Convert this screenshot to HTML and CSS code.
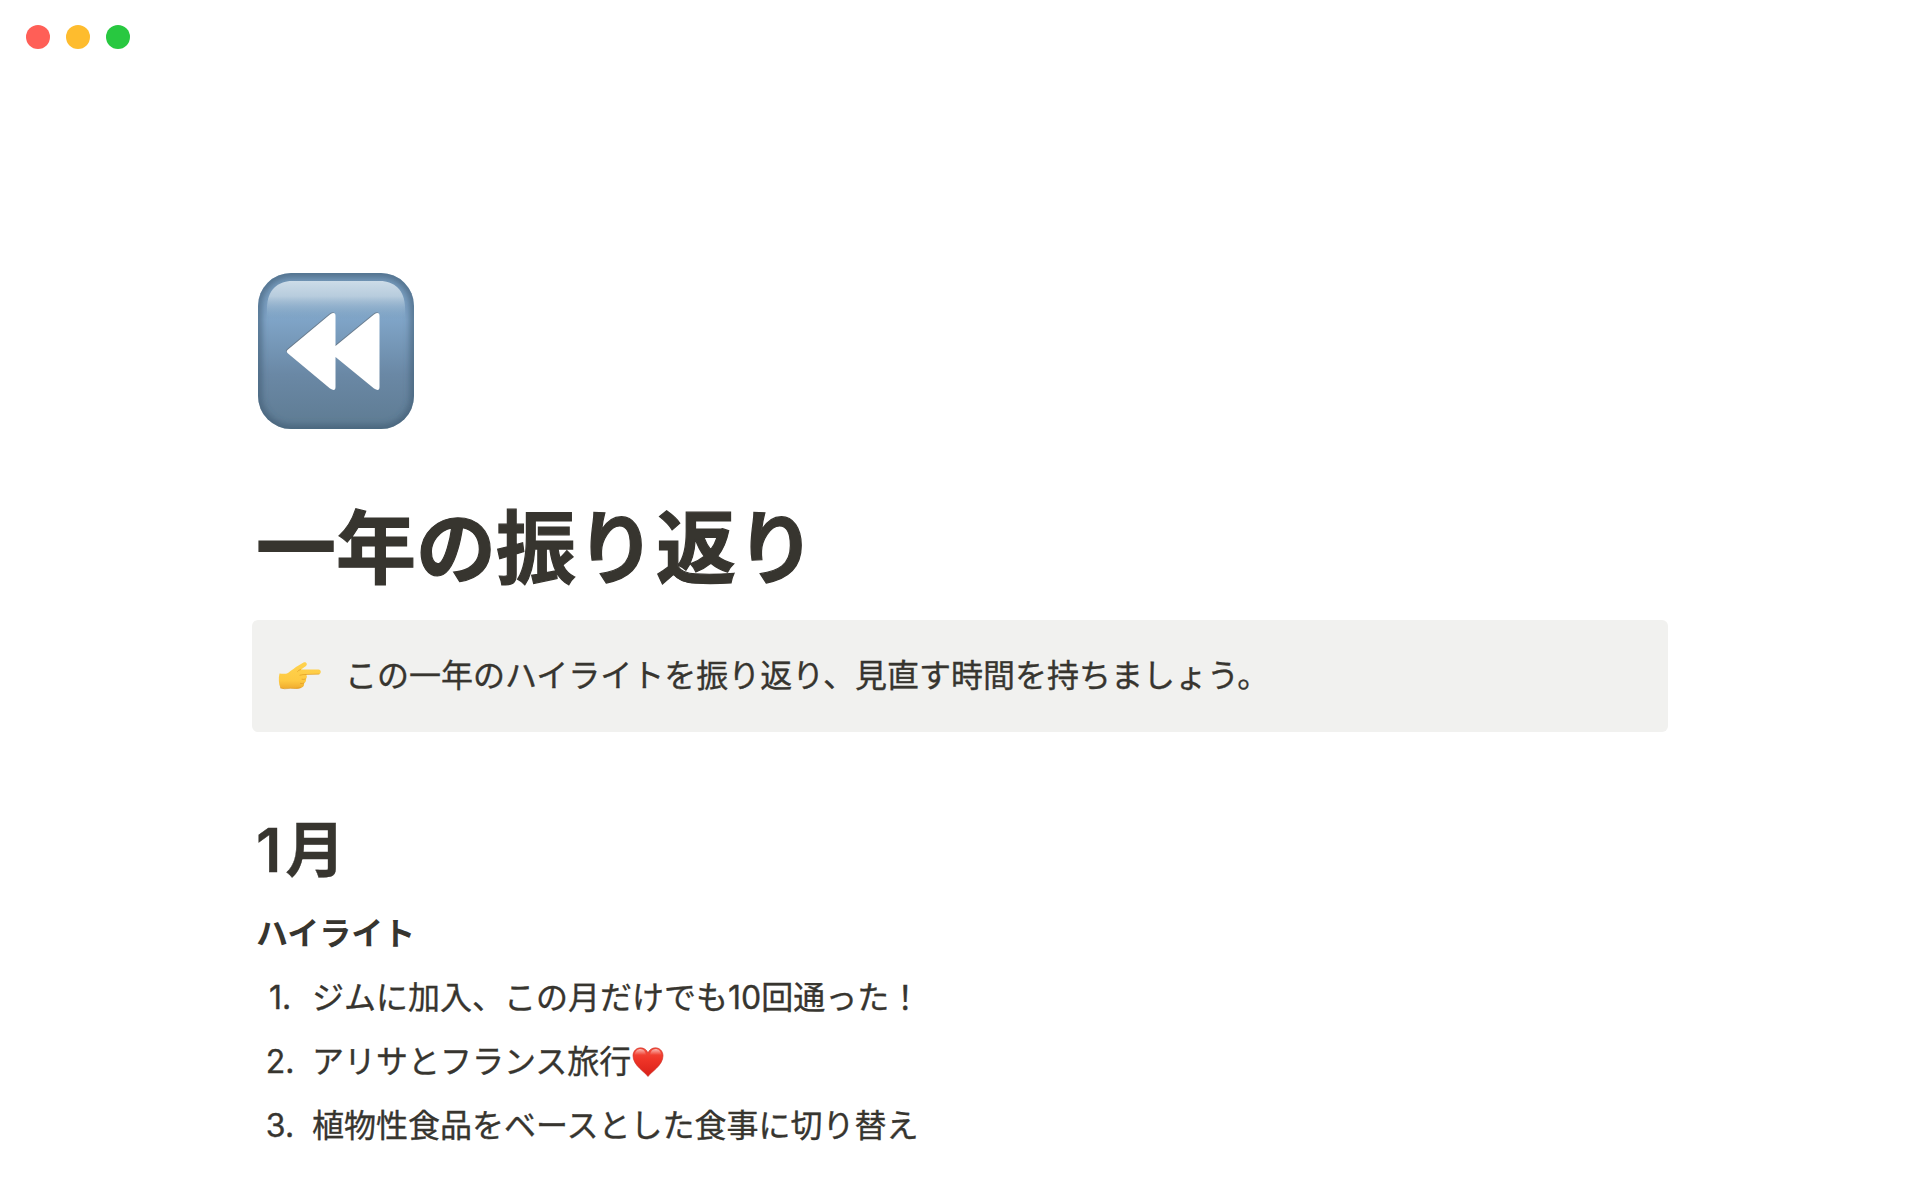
FILE: index.html
```html
<!DOCTYPE html>
<html lang="ja">
<head>
<meta charset="utf-8">
<title>一年の振り返り</title>
<link rel="stylesheet" href="styles.css">
</head>
<body>
<header class="titlebar">
  <span class="light light-close"></span>
  <span class="light light-minimize"></span>
  <span class="light light-zoom"></span>
</header>
<main class="page">
  <svg class="page-icon" viewBox="0 0 156 156" aria-hidden="true">
    <defs>
      <linearGradient id="face" x1="0" y1="0" x2="0" y2="1">
        <stop offset="0" stop-color="#7195b6"/>
        <stop offset=".3" stop-color="#7fa4c7"/>
        <stop offset=".65" stop-color="#6a88a5"/>
        <stop offset="1" stop-color="#5e7b92"/>
      </linearGradient>
      <linearGradient id="gloss" x1="0" y1="0" x2="0" y2="1">
        <stop offset="0" stop-color="#cddce8"/>
        <stop offset=".4" stop-color="#c3d5e3" stop-opacity=".85"/>
        <stop offset="1" stop-color="#8fb0cc" stop-opacity="0"/>
      </linearGradient>
      <clipPath id="tile"><rect width="156" height="156" rx="33"/></clipPath>
      <filter id="soft" x="-10%" y="-10%" width="120%" height="120%"><feGaussianBlur stdDeviation="3.2"/></filter>
    </defs>
    <g clip-path="url(#tile)">
      <rect width="156" height="156" fill="url(#face)"/>
      <rect width="156" height="156" rx="33" fill="none" stroke="#3c566e" stroke-opacity=".62" stroke-width="8" filter="url(#soft)"/>
      <path d="M9 46V35C9 17 20 8 34 8H122C136 8 147 17 147 35V46Z" fill="url(#gloss)"/>
    </g>
    <g fill="#5f6870" opacity=".6" transform="translate(-.6 -.8)">
      <path d="M30 76.500Q27.500 78.500 30 80.500L72 115.500Q77.500 119 77.500 114V84L116 115.500Q121.500 119 121.500 114V43Q121.500 38 116 41.500L77.500 73V43Q77.500 38 72 41.500Z"/>
    </g>
    <path fill="#fff" d="M30 76.500Q27.500 78.500 30 80.500L72 115.500Q77.500 119 77.500 114V84L116 115.500Q121.500 119 121.500 114V43Q121.500 38 116 41.500L77.500 73V43Q77.500 38 72 41.500Z"/>
  </svg>
  <h1 class="title">一年の振り返り</h1>
  <section class="callout">
    <svg class="callout-icon" viewBox="0 0 44 30" aria-hidden="true">
      <defs>
        <linearGradient id="skin" x1="0" y1="0" x2="0" y2="1">
          <stop offset="0" stop-color="#ffd34e"/>
          <stop offset=".7" stop-color="#fec941"/>
          <stop offset="1" stop-color="#efab2e"/>
        </linearGradient>
      </defs>
      <path fill="url(#skin)" d="M1.500 12.500C4 12.500 7 13.500 10 12C14 9 17 6.500 20.500 4.500L25.500 1.500C28 .5 30 3 28 5L23 8.500L40.500 8.500C43.500 8.700 43.500 13 40.500 13.200L28 13.500C29.500 15 29 17 27.800 18C28.500 20 27.500 21.500 26 22.200C26.500 24 25.500 26 23.500 26.500C21 28.200 17 27.800 12.500 27.300C9 26.800 6 28.500 2.500 27C.7 23 .3 17 1.500 12.500Z"/>
      <path fill="none" stroke="#dc951f" stroke-width=".8" stroke-opacity=".75" stroke-linecap="round" d="M22.500 8.600Q20.500 9 19.500 10.500M22 14.200Q25 13.300 28 13.500M24 18.300Q26 18.700 27.800 18M22.500 22.500Q24.500 23 26 22.200M2.500 27Q6 28.500 12.500 27.300Q17 27.800 23 26.700M28 13.500L41 13.100"/>
    </svg>
    <p class="callout-text">この一年のハイライトを振り返り、見直す時間を持ちましょう。</p>
  </section>
  <h2 class="month">1月</h2>
  <h3 class="subhead">ハイライト</h3>
  <ol class="highlights">
    <li class="item"><span class="marker">1.</span><span>ジムに加入、この月だけでも10回通った！</span></li>
    <li class="item"><span class="marker">2.</span><span>アリサとフランス旅行</span><svg class="heart" viewBox="0 0 32 32" aria-hidden="true">
      <defs>
        <linearGradient id="red" x1="0" y1="0" x2="0" y2="1">
          <stop offset="0" stop-color="#f4503f"/>
          <stop offset=".4" stop-color="#ef3528"/>
          <stop offset="1" stop-color="#d92019"/>
        </linearGradient>
        <linearGradient id="shine" x1="0" y1="0" x2="0" y2="1">
          <stop offset="0" stop-color="#fff" stop-opacity=".6"/>
          <stop offset="1" stop-color="#fff" stop-opacity="0"/>
        </linearGradient>
      </defs>
      <path fill="url(#red)" stroke="#c92a20" stroke-width=".6" d="M16 30.500C13 26 1 19.500 1 9.800C1 5 4.500 1.800 8.500 1.800C12 1.800 14.800 3.800 16 7C17.200 3.800 20 1.800 23.500 1.800C27.500 1.800 31 5 31 9.800C31 19.500 19 26 16 30.500Z"/>
      <path fill="url(#shine)" d="M2.800 9C3 5 5.500 3 8.500 3S13.500 5 14 9ZM18 9C18.500 5 20.500 3 23.500 3S29 5 29.200 9Z"/>
    </svg></li>
    <li class="item"><span class="marker">3.</span><span>植物性食品をベースとした食事に切り替え</span></li>
  </ol>
</main>
</body>
</html>
```
FILE: styles.css
```css
* {
  box-sizing: border-box;
  margin: 0;
  padding: 0;
}

body {
  height: 1200px;
  overflow: hidden;
  background: #fff;
  color: #37352f;
  font: 400 32px/48px Inter, "Noto Sans CJK JP", sans-serif;
  -webkit-text-stroke: 0.35px #37352f;
}

.titlebar {
  display: flex;
  gap: 16px;
  height: 74px;
  padding: 25px 26px;
}

.light {
  width: 24px;
  height: 24px;
  border-radius: 50%;
}

.light-close { background: #ff5f57; }
.light-minimize { background: #febc2e; }
.light-zoom { background: #28c840; }

.page {
  width: 1416px;
  margin: 0 auto;
  padding-top: 199px;
}

.page-icon {
  display: block;
  width: 156px;
  height: 156px;
  margin-left: 6px;
}

.title {
  height: 96px;
  margin: 71px 0 24px 4px;
  font-size: 80px;
  font-weight: 700;
  line-height: 96px;
  -webkit-text-stroke-width: 1.2px;
}

.callout {
  display: flex;
  align-items: center;
  gap: 23px;
  height: 112px;
  padding-left: 26px;
  border-radius: 6px;
  background: #f1f1ef;
}

.callout-icon {
  width: 44px;
  height: 30px;
}

.month {
  height: 78px;
  margin: 79px 0 0 4px;
  font-size: 60px;
  font-weight: 600;
  line-height: 78px;
  letter-spacing: 4px;
}

.subhead {
  margin: 21px 0 0 4px;
  font-size: 32px;
  font-weight: 600;
  -webkit-text-stroke-width: 0;
}

.highlights {
  display: flex;
  flex-direction: column;
  gap: 16px;
  margin: 16px 0 0 4px;
  list-style: none;
}

.item {
  display: flex;
  align-items: center;
  height: 48px;
}

.marker {
  width: 48px;
  margin-right: 8px;
  text-align: center;
}

.heart {
  width: 32px;
  height: 32px;
  margin-left: 1px;
}
```
